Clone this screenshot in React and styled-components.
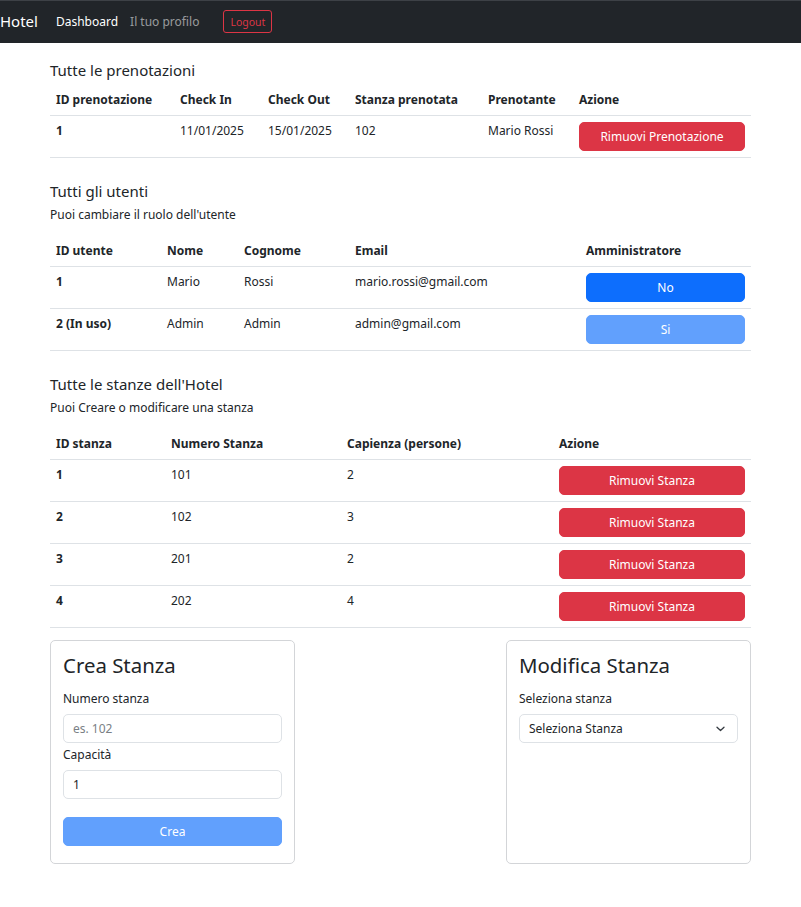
import React from "react";
import styled, { createGlobalStyle } from "styled-components";

const prenotazioni = [
  { id: "1", checkIn: "11/01/2025", checkOut: "15/01/2025", stanza: "102", prenotante: "Mario Rossi" },
];

const utenti = [
  { id: "1", nome: "Mario", cognome: "Rossi", email: "mario.rossi@gmail.com", admin: false, inUso: false },
  { id: "2 (In uso)", nome: "Admin", cognome: "Admin", email: "admin@gmail.com", admin: true, inUso: true },
];

const stanze = [
  { id: "1", numero: "101", capienza: "2" },
  { id: "2", numero: "102", capienza: "3" },
  { id: "3", numero: "201", capienza: "2" },
  { id: "4", numero: "202", capienza: "4" },
];

const Chevron = () => (
  <svg width="9" height="6" viewBox="0 0 9 6" fill="none">
    <path d="M1 1.2l3.5 3.3 3.5-3.3" stroke="#343a40" strokeWidth="1.3" strokeLinecap="round" strokeLinejoin="round" />
  </svg>
);

const App = () => {
  return (
    <>
      <GlobalStyle />
      <Navbar>
        <Brand>Hotel</Brand>
        <NavLink active>Dashboard</NavLink>
        <NavLink>Il tuo profilo</NavLink>
        <LogoutButton>Logout</LogoutButton>
      </Navbar>

      <Container>
        <Section>
          <SectionTitle>Tutte le prenotazioni</SectionTitle>
          <Table>
            <colgroup>
              <col width="124" />
              <col width="88" />
              <col width="87" />
              <col width="133" />
              <col width="91" />
              <col width="178" />
            </colgroup>
            <thead>
              <tr>
                <Th>ID prenotazione</Th>
                <Th>Check In</Th>
                <Th>Check Out</Th>
                <Th>Stanza prenotata</Th>
                <Th>Prenotante</Th>
                <Th>Azione</Th>
              </tr>
            </thead>
            <tbody>
              {prenotazioni.map(p => (
                <tr key={p.id}>
                  <Th as="td">{p.id}</Th>
                  <Td>{p.checkIn}</Td>
                  <Td>{p.checkOut}</Td>
                  <Td>{p.stanza}</Td>
                  <Td>{p.prenotante}</Td>
                  <Td>
                    <Button variant="danger">Rimuovi Prenotazione</Button>
                  </Td>
                </tr>
              ))}
            </tbody>
          </Table>
        </Section>

        <Section>
          <SectionTitle>Tutti gli utenti</SectionTitle>
          <Subtitle>Puoi cambiare il ruolo dell'utente</Subtitle>
          <Table>
            <colgroup>
              <col width="111" />
              <col width="77" />
              <col width="111" />
              <col width="231" />
              <col width="171" />
            </colgroup>
            <thead>
              <tr>
                <Th>ID utente</Th>
                <Th>Nome</Th>
                <Th>Cognome</Th>
                <Th>Email</Th>
                <Th>Amministratore</Th>
              </tr>
            </thead>
            <tbody>
              {utenti.map(u => (
                <tr key={u.id}>
                  <Th as="td">{u.id}</Th>
                  <Td>{u.nome}</Td>
                  <Td>{u.cognome}</Td>
                  <Td>{u.email}</Td>
                  <Td>
                    <Button variant="primary" disabled={u.inUso}>
                      {u.admin ? "Si" : "No"}
                    </Button>
                  </Td>
                </tr>
              ))}
            </tbody>
          </Table>
        </Section>

        <Section>
          <SectionTitle>Tutte le stanze dell'Hotel</SectionTitle>
          <Subtitle>Puoi Creare o modificare una stanza</Subtitle>
          <Table>
            <colgroup>
              <col width="115" />
              <col width="176" />
              <col width="212" />
              <col width="198" />
            </colgroup>
            <thead>
              <tr>
                <Th>ID stanza</Th>
                <Th>Numero Stanza</Th>
                <Th>Capienza (persone)</Th>
                <Th>Azione</Th>
              </tr>
            </thead>
            <tbody>
              {stanze.map(s => (
                <tr key={s.id}>
                  <Th as="td">{s.id}</Th>
                  <Td>{s.numero}</Td>
                  <Td>{s.capienza}</Td>
                  <Td>
                    <Button variant="danger">Rimuovi Stanza</Button>
                  </Td>
                </tr>
              ))}
            </tbody>
          </Table>
        </Section>

        <CardRow>
          <Card>
            <CardTitle>Crea Stanza</CardTitle>
            <Label>Numero stanza</Label>
            <Input placeholder="es. 102" />
            <Label spaced>Capacità</Label>
            <Input defaultValue="1" />
            <SubmitButton variant="primary" disabled>
              Crea
            </SubmitButton>
          </Card>
          <Card>
            <CardTitle>Modifica Stanza</CardTitle>
            <Label>Seleziona stanza</Label>
            <SelectBox>
              <span>Seleziona Stanza</span>
              <Chevron />
            </SelectBox>
          </Card>
        </CardRow>
      </Container>
    </>
  );
};

const GlobalStyle = createGlobalStyle`
  body {
    margin: 0;
    font-family: "Noto Sans", "Liberation Sans", sans-serif;
    font-size: 12px;
    line-height: 1.5;
    color: #212529;
    background: #fff;
  }
  * {
    box-sizing: border-box;
  }
`;

const Navbar = styled.nav`
  display: flex;
  align-items: center;
  height: 43px;
  padding-bottom: 1px;
  background: #212529;
  border-top: 1px solid #3d4146;
`;

const Brand = styled.span`
  font-size: 15px;
  line-height: 22.5px;
  color: #fff;
  margin-right: 12px;
`;

const NavLink = styled.span`
  padding: 0 6px;
  font-size: 12px;
  color: ${props => (props.active ? "#fff" : "rgba(255, 255, 255, 0.55)")};
`;

const LogoutButton = styled.button`
  margin-left: 18px;
  height: 23.5px;
  padding: 0 6px;
  font-family: inherit;
  font-size: 10.5px;
  color: #dc3545;
  background: transparent;
  border: 1px solid #dc3545;
  border-radius: 3px;
`;

const Container = styled.main`
  width: 701px;
  margin-left: 50px;
  padding-top: 18px;
  padding-bottom: 40px;
`;

const Section = styled.section`
  margin-bottom: 24px;

  &:last-of-type {
    margin-bottom: 12px;
  }
`;

const SectionTitle = styled.h5`
  margin: 0 0 6px;
  font-size: 15px;
  font-weight: 400;
  line-height: 18px;
`;

const Subtitle = styled.p`
  margin: 0 0 12px;
  line-height: 18px;
`;

const Table = styled.table`
  width: 701px;
  table-layout: fixed;
  border-collapse: collapse;
`;

const Th = styled.th`
  padding: 6px;
  text-align: left;
  font-weight: 700;
  line-height: 18px;
  vertical-align: top;
  border-bottom: 1px solid #dee2e6;
`;

const Td = styled.td`
  padding: 6px;
  line-height: 18px;
  vertical-align: top;
  border-bottom: 1px solid #dee2e6;
`;

const colors = {
  danger: "#dc3545",
  primary: "#0d6efd",
};

const Button = styled.button`
  display: block;
  width: 100%;
  height: 29px;
  padding: 0 9px;
  font-family: inherit;
  font-size: 12px;
  color: #fff;
  background: ${props => colors[props.variant]};
  border: 1px solid ${props => colors[props.variant]};
  border-radius: 5px;
  opacity: ${props => (props.disabled ? 0.65 : 1)};
`;

const CardRow = styled.div`
  display: flex;
  justify-content: space-between;
`;

const Card = styled.div`
  display: flex;
  flex-direction: column;
  width: 245px;
  height: 224px;
  padding: 12px;
  border: 1px solid #d3d5d8;
  border-radius: 5px;
`;

const CardTitle = styled.h3`
  margin: 0 0 12px;
  font-size: 20.4px;
  font-weight: 400;
  line-height: 24.5px;
`;

const Label = styled.label`
  margin-top: ${props => (props.spaced ? "3px" : "0")};
  margin-bottom: 6px;
  line-height: 18px;
`;

const Input = styled.input`
  height: 29px;
  padding: 0 9px;
  font-family: inherit;
  font-size: 12px;
  color: #212529;
  border: 1px solid #dee2e6;
  border-radius: 5px;
  outline: none;

  &::placeholder {
    color: #7a7f85;
  }
`;

const SubmitButton = styled(Button)`
  margin-top: 18px;
`;

const SelectBox = styled.div`
  display: flex;
  align-items: center;
  justify-content: space-between;
  height: 29px;
  padding: 1px 12px 0 9px;
  border: 1px solid #dee2e6;
  border-radius: 5px;
  color: #212529;

  svg {
    margin-top: 1px;
  }
`;

export default App;
